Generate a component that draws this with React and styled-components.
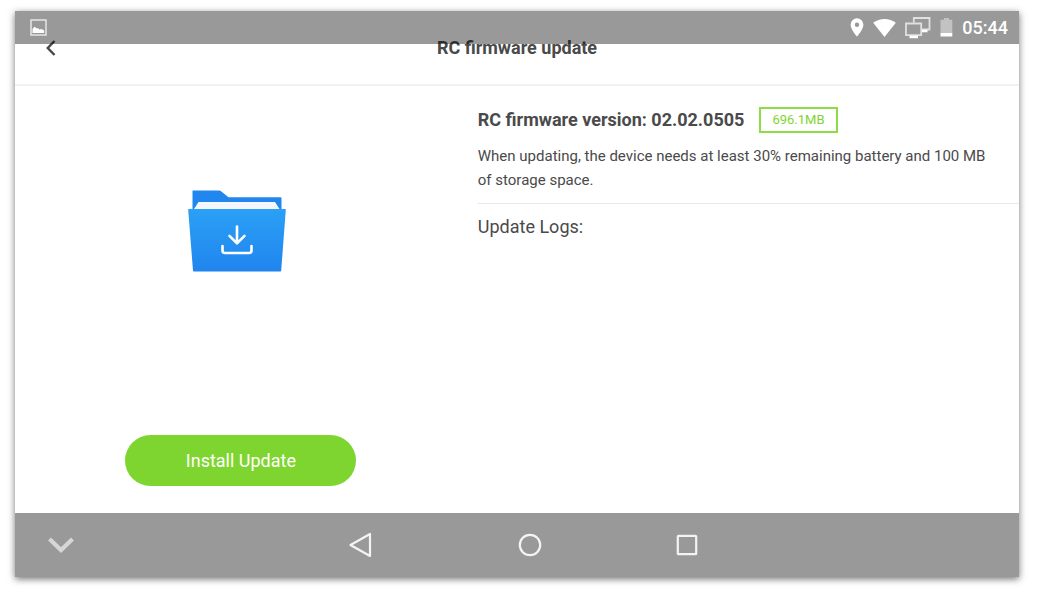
import React from 'react';
import styled, { createGlobalStyle } from 'styled-components';

const GlobalStyle = createGlobalStyle`
    * {
        box-sizing: border-box;
    }

    body {
        margin: 0;
        background: #fff;
        color: #4a4a4a;
        font-family: Roboto, 'Liberation Sans', sans-serif;
    }

    h1, h2, h3, p {
        margin: 0;
    }

    button {
        padding: 0;
        border: none;
        background: none;
        font-family: inherit;
    }

    svg {
        display: block;
    }
`;

const Page = styled.div`
    display: flex;
    min-height: 100vh;
    padding: 11px 23px 19px 15px;
`;

const Device = styled.div`
    position: relative;
    display: flex;
    flex: 1;
    flex-direction: column;
    background: #fff;
    box-shadow: 0 2px 7px rgba(0, 0, 0, 0.55);
`;

/* translucent, it lies over the top of the header */
const StatusBar = styled.div`
    position: absolute;
    top: 0;
    left: 0;
    right: 0;
    display: flex;
    align-items: center;
    justify-content: space-between;
    height: 33px;
    padding: 0 11px 0 15px;
    background: rgba(0, 0, 0, 0.4);
    color: #fff;
    pointer-events: none;
`;

const StatusIcons = styled.div`
    display: flex;
    align-items: center;
    gap: 9px;
`;

const Clock = styled.time`
    font-size: 18px;
    font-weight: 500;
    line-height: 24px;
`;

const Header = styled.header`
    display: grid;
    grid-template-columns: 72px 1fr 72px;
    align-items: center;
    height: 75px;
    border-bottom: 2px solid #f2f2f2;
`;

const BackButton = styled.button`
    display: flex;
    justify-content: center;
    width: 72px;
    padding: 8px 0;
`;

const Title = styled.h1`
    font-size: 18px;
    font-weight: 700;
    line-height: 24px;
    text-align: center;
`;

const Main = styled.main`
    display: grid;
    flex: 1;
    grid-template-columns: 45% 1fr;
`;

const Action = styled.section`
    display: flex;
    flex-direction: column;
    align-items: center;
    justify-content: space-between;
    padding: 104px 0 27px;
`;

const InstallButton = styled.button`
    width: 231px;
    height: 51px;
    border-radius: 26px;
    background: #7fd530;
    color: #fff;
    font-size: 18px;
`;

const Details = styled.section`
    padding: 21px 0 0 11px;
`;

const VersionRow = styled.div`
    display: flex;
    align-items: center;
    gap: 15px;
`;

const Version = styled.h2`
    font-size: 18px;
    font-weight: 700;
    line-height: 24px;
`;

const Size = styled.span`
    padding: 0 11px;
    border: 2px solid #8edb4a;
    color: #7fd530;
    font-size: 13px;
    line-height: 22px;
`;

const Note = styled.p`
    padding: 11px 20px 11px 0;
    border-bottom: 1px solid #e8e8e8;
    font-size: 15px;
    line-height: 24px;
`;

const LogsTitle = styled.h3`
    padding-top: 11px;
    font-size: 18px;
    font-weight: 400;
    line-height: 24px;
`;

const NavBar = styled.nav`
    display: grid;
    grid-template-columns: 92fr 174fr 158fr 182fr 132fr 266fr;
    height: 64px;
    background: #999;
`;

const NavButton = styled.button`
    display: flex;
    grid-column: ${(props) => props.$column};
    align-items: center;
    justify-content: center;
`;

const PictureIcon = () => (
    <svg width='17' height='17' viewBox='0 0 17 17'>
        <rect x='1' y='1' width='15' height='15' fill='none' stroke='#e6e6e6' strokeWidth='1.5' />
        <path d='M2.5 14V10L4.500 7.800l2 1.500L8 9.200l1.500 1.300 2-.5 2.700 1.500V14z' fill='#fff' />
    </svg>
);

const PinIcon = () => (
    <svg width='14' height='19' viewBox='0 0 14 19'>
        <path
            d='M7 .3A6.4 6.4 0 0 0 .6 6.7C.6 11.300 7 18.600 7 18.600s6.400-7.300 6.400-11.900A6.400 6.400 0 0 0 7 .3zm0 8.600a2.200 2.200 0 1 1 0-4.400 2.200 2.200 0 0 1 0 4.400z'
            fill='#fff'
        />
    </svg>
);

const WifiIcon = () => (
    <svg width='23' height='18' viewBox='0 0 23 18'>
        <path d='M.2 3.800C3.400 1.300 7.200 0 11.500 0s8.100 1.300 11.300 3.800L11.500 18z' fill='#fff' />
    </svg>
);

const ScreensIcon = () => (
    <svg width='26' height='22' viewBox='0 0 26 22' fill='none' stroke='#e0e0e0' strokeWidth='1.800'>
        <path d='M8.800 5.500V1h15.700v11.500h-7.500' />
        <path d='M1 6.500h15.200v11.700H1z' />
        <path d='M17 14h5.500M4.500 20h8.500' stroke='#fff' strokeWidth='2.600' />
    </svg>
);

const BatteryIcon = () => (
    <svg width='13' height='19' viewBox='0 0 13 19'>
        <path d='M4 0h5v1.800h3.300V15H.5V1.800H4z' fill='#c2c2c2' />
        <path d='M.5 15h11.800v3.500H.5z' fill='#fff' />
    </svg>
);

const ChevronLeftIcon = () => (
    <svg width='10' height='16' viewBox='0 0 10 16'>
        <path d='M8.500 1 1.800 8l6.700 7' fill='none' stroke='#4a4a4a' strokeWidth='2.500' />
    </svg>
);

const FolderIcon = () => (
    <svg width='106' height='82' viewBox='0 0 106 82'>
        <defs>
            <linearGradient id='front' x1='0' y1='0' x2='0' y2='1'>
                <stop offset='0' stopColor='#2ba0f6' />
                <stop offset='1' stopColor='#2085ee' />
            </linearGradient>
        </defs>
        <path d='M5 .500h26.500a2 2 0 0 1 1.200.4l7.800 6.300h52a1 1 0 0 1 1 1V24H4.500V1.500a1 1 0 0 1 .5-1z' fill='#2186ee' />
        <path d='M10.500 12h76.500l4.500 7H6z' fill='#f4f8fd' />
        <path d='M1 19h96a.8.8 0 0 1 .8 1l-4.600 60.500a1 1 0 0 1-1 1H6a1 1 0 0 1-1-1L.2 20a.8.8 0 0 1 .8-1z' fill='url(#front)' />
        <g fill='none' stroke='#fff' strokeWidth='2.600' strokeLinecap='round' strokeLinejoin='round'>
            <path d='M49 36.500v16.500M41.500 45.800 49 53.300l7.500-7.500' />
            <path d='M34.500 56v4.500a2.500 2.500 0 0 0 2.500 2.500h24a2.500 2.500 0 0 0 2.500-2.500V56' />
        </g>
    </svg>
);

const CollapseIcon = () => (
    <svg width='28' height='20' viewBox='0 0 28 20'>
        <path d='M2.500 4 14 15 25.500 4' fill='none' stroke='#d6d6d6' strokeWidth='4.200' />
    </svg>
);

const NavBackIcon = () => (
    <svg width='24' height='26' viewBox='0 0 24 26'>
        <path d='M22 2v22L2.500 13z' fill='none' stroke='#f4f4f4' strokeWidth='2.200' strokeLinejoin='round' />
    </svg>
);

const NavHomeIcon = () => (
    <svg width='24' height='24' viewBox='0 0 24 24'>
        <circle cx='12' cy='12' r='10.200' fill='none' stroke='#f4f4f4' strokeWidth='2.200' />
    </svg>
);

const NavRecentIcon = () => (
    <svg width='22' height='22' viewBox='0 0 22 22'>
        <rect x='1.800' y='1.800' width='18.400' height='18.400' rx='.8' fill='none' stroke='#f4f4f4' strokeWidth='2.200' />
    </svg>
);

class App extends React.Component {
    render() {
        return (
            <>
                <GlobalStyle />
                <Page>
                    <Device>
                        <Header>
                            <BackButton type='button' aria-label='Back'>
                                <ChevronLeftIcon />
                            </BackButton>
                            <Title>RC firmware update</Title>
                        </Header>
                        <StatusBar>
                            <PictureIcon />
                            <StatusIcons>
                                <PinIcon />
                                <WifiIcon />
                                <ScreensIcon />
                                <BatteryIcon />
                                <Clock>05:44</Clock>
                            </StatusIcons>
                        </StatusBar>
                        <Main>
                            <Action>
                                <FolderIcon />
                                <InstallButton type='button'>Install Update</InstallButton>
                            </Action>
                            <Details>
                                <VersionRow>
                                    <Version>RC firmware version: 02.02.0505</Version>
                                    <Size>696.1MB</Size>
                                </VersionRow>
                                <Note>
                                    When updating, the device needs at least 30% remaining battery
                                    and 100 MB of storage space.
                                </Note>
                                <LogsTitle>Update Logs:</LogsTitle>
                            </Details>
                        </Main>
                        <NavBar>
                            <NavButton type='button' $column={1} aria-label='Hide bar'>
                                <CollapseIcon />
                            </NavButton>
                            <NavButton type='button' $column={3} aria-label='Back'>
                                <NavBackIcon />
                            </NavButton>
                            <NavButton type='button' $column={4} aria-label='Home'>
                                <NavHomeIcon />
                            </NavButton>
                            <NavButton type='button' $column={5} aria-label='Recent apps'>
                                <NavRecentIcon />
                            </NavButton>
                        </NavBar>
                    </Device>
                </Page>
            </>
        );
    }
}

export default App;
